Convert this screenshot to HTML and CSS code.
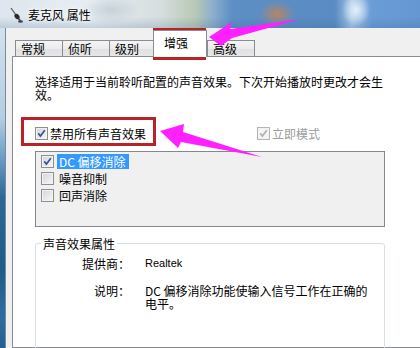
FILE: index.html
```html
<!DOCTYPE html>
<html lang="zh-CN">
<head>
<meta charset="utf-8">
<title>麦克风 属性</title>
<link rel="stylesheet" href="styles.css">
</head>
<body>
<div class="window">
  <div class="titlebar">
    <svg class="app-icon" width="13" height="16" viewBox="0 0 13 16">
      <path d="M1 1 L6 8" stroke="#555" stroke-width="1.2" fill="none"/>
      <ellipse cx="7" cy="9.5" rx="2.2" ry="3" transform="rotate(-40 7 9.5)" fill="#2b2b2b"/>
      <path d="M8.5 11.5 L10.5 14" stroke="#333" stroke-width="1.4"/>
      <ellipse cx="10.5" cy="14.5" rx="2.5" ry="1.2" fill="#444"/>
    </svg>
    <span class="title">麦克风 属性</span>
  </div>
  <div class="main">
    <div class="frame-left"></div>
    <div class="client">
      <div class="tabs">
        <div class="tab">常规</div>
        <div class="tab">侦听</div>
        <div class="tab">级别</div>
        <div class="tab selected">增强</div>
        <div class="tab">高级</div>
      </div>
      <div class="panel">
        <p class="intro">选择适用于当前聆听配置的声音效果。下次开始播放时更改才会生效。</p>
        <div class="options">
          <label class="check">
            <span class="box"><svg viewBox="0 0 11 11"><path d="M2.3 5.4 L4.4 8 L8.8 2.2" /></svg></span>
            <span>禁用所有声音效果</span>
          </label>
          <label class="check disabled">
            <span class="box"><svg viewBox="0 0 11 11"><path d="M2.3 5.4 L4.4 8 L8.8 2.2" /></svg></span>
            <span>立即模式</span>
          </label>
        </div>
        <div class="listbox">
          <div class="item">
            <span class="box"><svg viewBox="0 0 11 11"><path d="M2.3 5.4 L4.4 8 L8.8 2.2" /></svg></span>
            <span class="item-text selected-item">DC 偏移消除</span>
          </div>
          <div class="item">
            <span class="box"></span>
            <span class="item-text">噪音抑制</span>
          </div>
          <div class="item">
            <span class="box"></span>
            <span class="item-text">回声消除</span>
          </div>
        </div>
        <fieldset class="group">
          <legend>声音效果属性</legend>
          <div class="props">
            <span class="key">提供商：</span>
            <span class="val latin">Realtek</span>
            <span class="key">说明：</span>
            <span class="val">DC 偏移消除功能使输入信号工作在正确的电平。</span>
          </div>
        </fieldset>
      </div>
    </div>
  </div>
  <svg class="annotations" width="420" height="348" viewBox="0 0 420 348">
    <rect x="154.5" y="29.5" width="50" height="29" fill="none" stroke="#b8232a" stroke-width="3"/>
    <rect x="22.5" y="118.5" width="132" height="26" fill="none" stroke="#b8232a" stroke-width="3"/>
    <polygon points="209,37 232,22 230,29 301,19 232,38 221,46" fill="#ff20ff"/>
    <polygon points="160,131 184,124 183,132 262,157 181,142 178,148" fill="#ff20ff"/>
  </svg>
</div>
</body>
</html>
```
FILE: styles.css
```css
html, body {
  margin: 0;
  padding: 0;
}
body {
  width: 420px;
  height: 348px;
  overflow: hidden;
  font-family: "Noto Sans CJK SC", "Noto Sans", sans-serif;
  font-size: 12px;
  color: #000;
  background: #fff;
}
.window {
  position: relative;
  width: 420px;
  height: 348px;
  display: flex;
  flex-direction: column;
  overflow: hidden;
}
.titlebar {
  flex: none;
  height: 28px;
  box-sizing: border-box;
  display: flex;
  align-items: center;
  gap: 5px;
  padding: 2px 0 0 10px;
  background:
    radial-gradient(ellipse 18px 13px at 277px 14px, rgba(196,132,86,0.85), rgba(196,132,86,0) 100%),
    radial-gradient(ellipse 14px 16px at 356px 10px, rgba(232,242,252,0.95), rgba(232,242,252,0) 100%),
    radial-gradient(ellipse 30px 14px at 110px 10px, rgba(170,185,200,0.5), rgba(170,185,200,0) 100%),
    linear-gradient(180deg, rgba(255,255,255,0) 60%, rgba(40,80,130,0.18) 100%),
    linear-gradient(90deg, #dde6ee 0, #e8eef3 90px, #d6dedf 160px, #b9c9b6 195px, #8eb0cc 212px, #5d8fc5 232px, #5a8cc3 335px, #a9c8e8 352px, #6a9cd6 372px, #6597d2 420px);
}
.app-icon {
  flex: none;
  display: block;
}
.title {
  line-height: 14px;
  text-shadow: 0 0 5px #fff, 0 0 3px #fff;
}
.main {
  flex: 1;
  min-height: 0;
  display: flex;
}
.frame-left {
  flex: none;
  width: 5px;
  background: linear-gradient(180deg, #d2e1ee 0, #b4cde2 90px, #6c9cc6 130px, #2a6899 170px, #1f5b8d 240px, #2d6d9f 290px, #1b5283 348px);
}
.client {
  flex: 1;
  min-width: 0;
  display: flex;
  flex-direction: column;
  background: #f0f0f0;
  border-left: 1px solid #7b8a98;
  padding-left: 6px;
}
.tabs {
  flex: none;
  height: 28px;
  display: flex;
  align-items: flex-end;
  padding-left: 3px;
}
.tab {
  flex: none;
  height: 16px;
  box-sizing: border-box;
  border: 1px solid #898c95;
  border-bottom: 0;
  padding: 1px 17px 0 5px;
  margin-right: -1px;
  line-height: 14px;
  background: linear-gradient(#f4f4f4, #ececec 50%, #e0e0e0 51%, #e7e7e7);
}
.tab.selected {
  position: relative;
  z-index: 1;
  height: 27px;
  margin: 0 0 -1px -3px;
  padding: 5px 18px 0 10px;
  background: #fff;
}
.panel {
  flex: 1;
  min-height: 0;
  border: 1px solid #898c95;
  border-right: 0;
  background: #fff;
  padding: 18px 0 0 22px;
}
.intro {
  margin: 0;
  width: 350px;
  line-height: 13px;
}
.options {
  margin-top: 26px;
  display: grid;
  grid-template-columns: 222px auto;
  line-height: 13px;
}
.check {
  display: flex;
  align-items: center;
  gap: 2px;
  height: 13px;
}
.check.disabled {
  color: #9c9c9c;
}
.box {
  flex: none;
  width: 13px;
  height: 13px;
  box-sizing: border-box;
  border: 1px solid #8e8f8f;
  background: linear-gradient(135deg, #d2d5da, #f7f7f7);
  box-shadow: inset 0 0 0 1px #f2f2f2;
  display: flex;
}
.box svg {
  width: 11px;
  height: 11px;
}
.box path {
  fill: none;
  stroke: #3d5494;
  stroke-width: 1.7;
}
.disabled .box {
  border-color: #b5b5b5;
  background: #f4f4f4;
}
.disabled .box path {
  stroke: #b0b0b0;
}
.listbox {
  margin-top: 11px;
  width: 350px;
  height: 76px;
  box-sizing: border-box;
  border: 1px solid #828790;
  background: #f0f0f0;
  padding: 1px 0 0 5px;
}
.item {
  display: flex;
  align-items: center;
  gap: 3px;
  height: 17px;
}
.item-text {
  line-height: 15px;
  padding: 0 3px 0 2px;
}
.selected-item {
  background: #3399ff;
  color: #fff;
}
.group {
  margin: 10px 0 0 0;
  padding: 0 0 40px 0;
  width: 350px;
  box-sizing: border-box;
  min-width: 0;
  border: 1px solid #d5dfe5;
  border-radius: 3px;
}
.group legend {
  margin-left: 5px;
  padding: 0 2px;
  line-height: 13px;
}
.props {
  display: grid;
  grid-template-columns: 94px 230px;
  column-gap: 15px;
  row-gap: 14px;
  padding-top: 7px;
  line-height: 13px;
}
.key {
  text-align: right;
}
.latin {
  font-family: "Liberation Sans", Arial, sans-serif;
  font-size: 11px;
}
.annotations {
  position: absolute;
  left: 0;
  top: 0;
  pointer-events: none;
}
```
